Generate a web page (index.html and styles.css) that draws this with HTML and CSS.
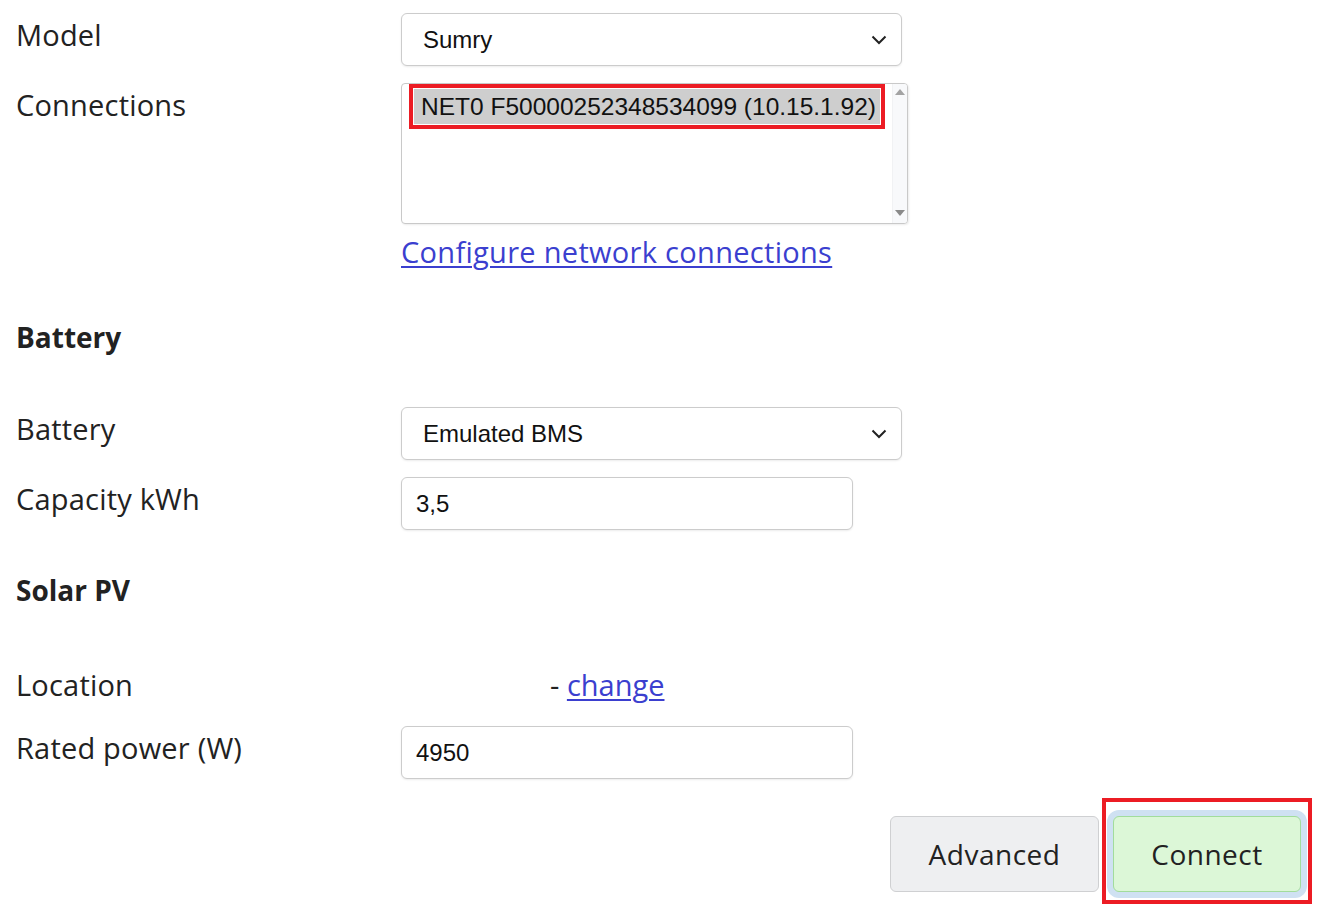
FILE: index.html
```html
<!DOCTYPE html>
<html>
<head>
<meta charset="utf-8">
<link rel="stylesheet" href="styles.css">
</head>
<body>
<div class="form">
  <div class="row">
    <div class="label">Model</div>
    <div class="control">
      <div class="select">
        <span class="select-text">Sumry</span>
        <svg class="chev" width="16" height="10" viewBox="0 0 16 10"><path d="M1.5 1.5 L8 8 L14.5 1.5" fill="none" stroke="#222" stroke-width="2"/></svg>
      </div>
    </div>
  </div>

  <div class="row row-conn">
    <div class="label">Connections</div>
    <div class="control">
      <div class="listbox">
        <div class="options">
          <div class="option selected">NET0 F50000252348534099 (10.15.1.92)</div>
        </div>
        <div class="scrollbar">
          <svg class="arrow up" width="10" height="6" viewBox="0 0 10 6"><path d="M0 6 L5 0 L10 6 Z" fill="#a3a3a3"/></svg>
          <svg class="arrow down" width="10" height="6" viewBox="0 0 10 6"><path d="M0 0 L5 6 L10 0 Z" fill="#8a8a8a"/></svg>
        </div>
      </div>
      <a class="link config" href="#">Configure network connections</a>
    </div>
  </div>

  <h2 class="heading h-battery">Battery</h2>

  <div class="row">
    <div class="label">Battery</div>
    <div class="control">
      <div class="select">
        <span class="select-text">Emulated BMS</span>
        <svg class="chev" width="16" height="10" viewBox="0 0 16 10"><path d="M1.5 1.5 L8 8 L14.5 1.5" fill="none" stroke="#222" stroke-width="2"/></svg>
      </div>
    </div>
  </div>

  <div class="row">
    <div class="label">Capacity kWh</div>
    <div class="control">
      <div class="input">3,5</div>
    </div>
  </div>

  <h2 class="heading h-solar">Solar PV</h2>

  <div class="row row-location">
    <div class="label">Location</div>
    <div class="control location">- <a class="link" href="#">change</a></div>
  </div>

  <div class="row">
    <div class="label">Rated power (W)</div>
    <div class="control">
      <div class="input">4950</div>
    </div>
  </div>

  <div class="buttons">
    <button class="btn btn-adv">Advanced</button>
    <button class="btn btn-connect">Connect</button>
  </div>
</div>
</body>
</html>
```

FILE: styles.css
```css
html, body {
  margin: 0;
  padding: 0;
  background: #ffffff;
}
body {
  font-family: "Open Sans", "DejaVu Sans", sans-serif;
  color: #222222;
  overflow: hidden;
  height: 905px;
}
.form {
  padding: 13px 0 0 16px;
  width: 1285px;
}
.row {
  display: grid;
  grid-template-columns: 385px 1fr;
  margin-bottom: 17px;
}
.label {
  font-size: 29px;
  line-height: 40px;
  padding-top: 2px;
  color: #222;
  letter-spacing: 0.2px;
}
.select {
  position: relative;
  width: 501px;
  height: 53px;
  box-sizing: border-box;
  border: 1px solid #cccccc;
  border-radius: 6px;
  box-shadow: 0 1px 2px rgba(0,0,0,0.08);
  background: #fff;
  display: flex;
  align-items: center;
  padding-left: 21px;
  font-family: "Liberation Sans", Arial, sans-serif;
  font-size: 24px;
  color: #111;
}
.chev {
  position: absolute;
  right: 14px;
  top: 21px;
}
.input {
  width: 452px;
  height: 53px;
  box-sizing: border-box;
  border: 1px solid #cccccc;
  border-radius: 6px;
  box-shadow: 0 1px 2px rgba(0,0,0,0.08);
  background: #fff;
  display: flex;
  align-items: center;
  padding-left: 14px;
  font-family: "Liberation Sans", Arial, sans-serif;
  font-size: 24px;
  color: #111;
}
.row-conn {
  margin-bottom: 0;
}
.listbox {
  width: 507px;
  height: 141px;
  box-sizing: border-box;
  border: 1px solid #c9c9c9;
  border-radius: 4px;
  box-shadow: 1px 1px 2px rgba(0,0,0,0.08);
  display: flex;
  background: #fff;
}
.options {
  flex: 1;
  padding: 5px 0 0 12px;
}
.option {
  position: relative;
  width: 466px;
  height: 35px;
  line-height: 35px;
  box-sizing: border-box;
  padding-left: 7px;
  font-family: "Liberation Sans", Arial, sans-serif;
  font-size: 24.5px;
  color: #111;
  white-space: nowrap;
}
.option.selected {
  background: #cecece;
}
.option.selected::after {
  content: "";
  position: absolute;
  left: -5px;
  top: -5px;
  right: -5px;
  bottom: -5px;
  border: 4px solid #ec1c24;
  box-sizing: border-box;
}
.scrollbar {
  width: 14px;
  background: #f8f9fb;
  border-left: 1px solid #f1f2f4;
  position: relative;
  border-radius: 0 3px 3px 0;
}
.arrow {
  position: absolute;
  left: 2px;
}
.arrow.up {
  top: 5px;
}
.arrow.down {
  bottom: 7px;
}
.link {
  color: #3b3fcf;
  text-decoration: underline;
  text-underline-offset: 3px;
  text-decoration-thickness: 1.5px;
}
.config {
  display: block;
  margin-top: 8px;
  font-size: 29px;
  line-height: 40px;
  letter-spacing: 0.3px;
}
.heading {
  margin: 0;
  font-size: 28px;
  line-height: 40px;
  font-weight: 700;
  color: #222;
}
.h-battery {
  margin-top: 45px;
  margin-bottom: 50px;
}
.h-solar {
  margin-top: 40px;
  margin-bottom: 53px;
}
.row-location {
  margin-bottom: 21px;
}
.location {
  font-size: 29px;
  line-height: 40px;
  padding-top: 2px;
  padding-left: 149px;
  color: #222;
}
.buttons {
  display: flex;
  justify-content: flex-end;
  gap: 14px;
  margin-top: 37px;
}
.btn {
  height: 76px;
  box-sizing: border-box;
  border-radius: 6px;
  font-family: "Open Sans", "DejaVu Sans", sans-serif;
  font-size: 28px;
  color: #222;
  letter-spacing: 0.5px;
  cursor: pointer;
}
.btn-adv {
  width: 209px;
  background: #eeeff1;
  border: 1px solid #cfd0d2;
}
.btn-connect {
  position: relative;
  width: 188px;
  background: #dcf7d7;
  border: 1px solid #a2dc9c;
  box-shadow: 0 0 0 6px #cfe1f2;
}
.btn-connect::after {
  content: "";
  position: absolute;
  left: -12px;
  right: -12px;
  top: -19px;
  bottom: -13px;
  border: 4px solid #ec1c24;
  box-sizing: border-box;
  pointer-events: none;
}
```
